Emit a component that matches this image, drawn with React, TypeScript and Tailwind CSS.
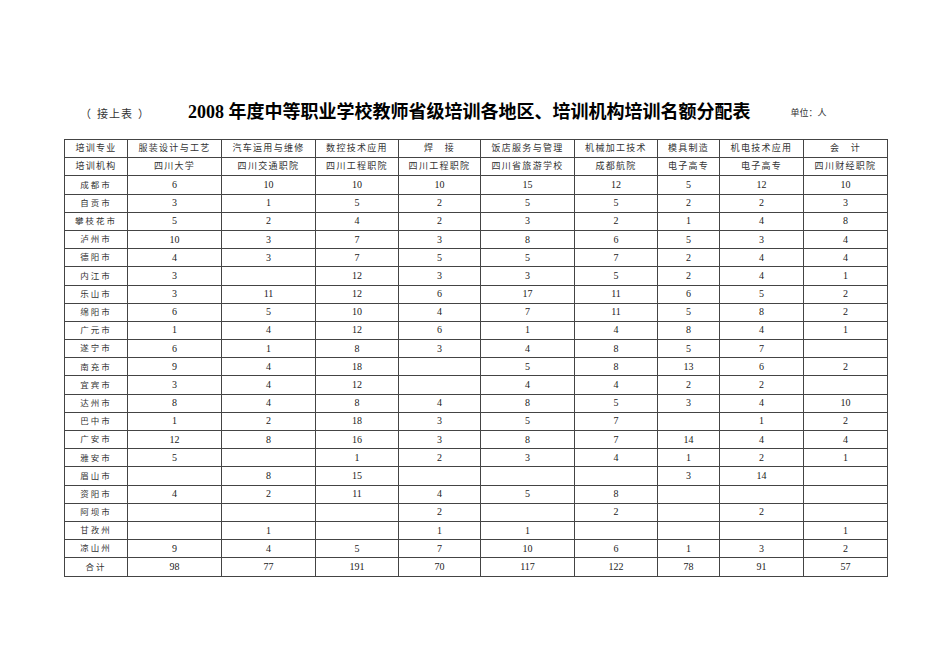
import React from 'react';

const majors = ['服装设计与工艺', '汽车运用与维修', '数控技术应用', '焊　接', '饭店服务与管理', '机械加工技术', '模具制造', '机电技术应用', '会　计'];
const schools = ['四川大学', '四川交通职院', '四川工程职院', '四川工程职院', '四川省旅游学校', '成都航院', '电子高专', '电子高专', '四川财经职院'];

const rows: [string, string[]][] = [
  ['成都市', ['6', '10', '10', '10', '15', '12', '5', '12', '10']],
  ['自贡市', ['3', '1', '5', '2', '5', '5', '2', '2', '3']],
  ['攀枝花市', ['5', '2', '4', '2', '3', '2', '1', '4', '8']],
  ['泸州市', ['10', '3', '7', '3', '8', '6', '5', '3', '4']],
  ['德阳市', ['4', '3', '7', '5', '5', '7', '2', '4', '4']],
  ['内江市', ['3', '', '12', '3', '3', '5', '2', '4', '1']],
  ['乐山市', ['3', '11', '12', '6', '17', '11', '6', '5', '2']],
  ['绵阳市', ['6', '5', '10', '4', '7', '11', '5', '8', '2']],
  ['广元市', ['1', '4', '12', '6', '1', '4', '8', '4', '1']],
  ['遂宁市', ['6', '1', '8', '3', '4', '8', '5', '7', '']],
  ['南充市', ['9', '4', '18', '', '5', '8', '13', '6', '2']],
  ['宜宾市', ['3', '4', '12', '', '4', '4', '2', '2', '']],
  ['达州市', ['8', '4', '8', '4', '8', '5', '3', '4', '10']],
  ['巴中市', ['1', '2', '18', '3', '5', '7', '', '1', '2']],
  ['广安市', ['12', '8', '16', '3', '8', '7', '14', '4', '4']],
  ['雅安市', ['5', '', '1', '2', '3', '4', '1', '2', '1']],
  ['眉山市', ['', '8', '15', '', '', '', '3', '14', '']],
  ['资阳市', ['4', '2', '11', '4', '5', '8', '', '', '']],
  ['阿坝市', ['', '', '', '2', '', '2', '', '2', '']],
  ['甘孜州', ['', '1', '', '1', '1', '', '', '', '1']],
  ['凉山州', ['9', '4', '5', '7', '10', '6', '1', '3', '2']],
  ['合计', ['98', '77', '191', '70', '117', '122', '78', '91', '57']],
];

const colWidths = ['w-[63px]', 'w-[94px]', 'w-[94px]', 'w-[83px]', 'w-[82px]', 'w-[94px]', 'w-[83px]', 'w-[62px]', 'w-[84px]', 'w-[84px]'];

const cell = 'border border-[#444] h-[18.2px] p-0 text-center align-middle leading-none';
const head = `${cell} text-[9px] tracking-[1.3px] text-[#333]`;

export default function App() {
  return (
    <div className="w-[950px] h-[672px] bg-white text-[#222]" style={{ fontFamily: '"Liberation Serif", "Noto Sans CJK SC", serif' }}>
      <div className="flex items-end pt-[97px] h-[121px]">
        <span
          className="ml-[80px] w-[108px] text-[11px] leading-none pb-[2px] text-[#333] tracking-[1px] flex gap-[5px]"
          style={{ fontFamily: '"Noto Sans CJK SC", sans-serif' }}
        >
          <span>（</span>
          <span>接上表</span>
          <span>）</span>
        </span>
        <h1 className="text-[18px] font-bold leading-none text-black">2008 年度中等职业学校教师省级培训各地区、培训机构培训名额分配表</h1>
        <span className="ml-[40px] text-[9px] leading-none pb-[3px] text-[#333]">单位：人</span>
      </div>
      <table className="ml-[64px] mt-[18px] border-collapse table-fixed w-[823px] text-[10px]">
        <colgroup>
          {colWidths.map((w, i) => (
            <col key={i} className={w} />
          ))}
        </colgroup>
        <tbody>
          <tr>
            <td className={head}>培训专业</td>
            {majors.map((m, i) => (
              <td key={i} className={head}>{m}</td>
            ))}
          </tr>
          <tr>
            <td className={head}>培训机构</td>
            {schools.map((s, i) => (
              <td key={i} className={head}>{s}</td>
            ))}
          </tr>
          {rows.map(([name, vals]) => (
            <tr key={name}>
              <td className={`${cell} text-[8.5px] tracking-[2px] text-[#333]`}>{name}</td>
              {vals.map((v, i) => (
                <td key={i} className={cell}>{v}</td>
              ))}
            </tr>
          ))}
        </tbody>
      </table>
    </div>
  );
}
